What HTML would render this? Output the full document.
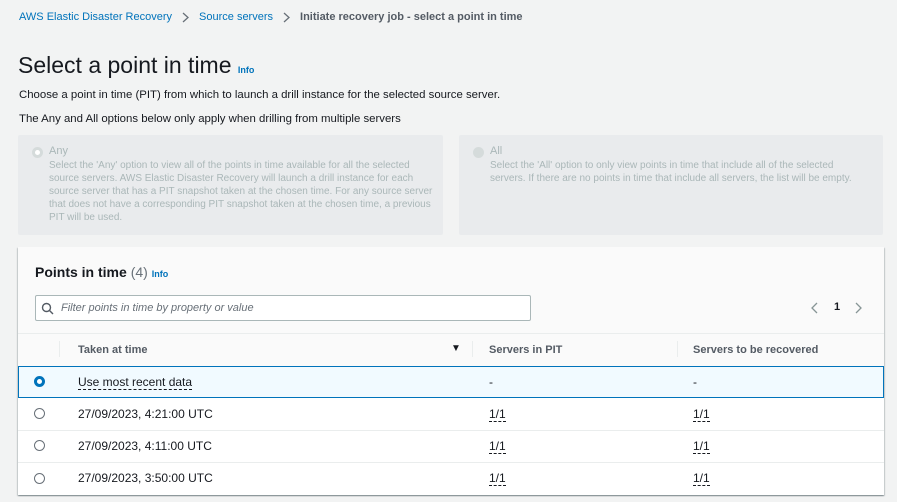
<!DOCTYPE html>
<html><head><style>
*{box-sizing:border-box;margin:0;padding:0}
body{width:897px;height:502px;background:#f2f3f3;font-family:"Liberation Sans",sans-serif;color:#16191f;position:relative;overflow:hidden;font-size:12px}
.a{position:absolute;white-space:nowrap}
.link{color:#0073bb}
.card{position:absolute;background:#e9ebed;border-radius:2px}
.dim{color:#aab7b8}
.rad{position:absolute;width:11px;height:11px;border-radius:50%}
.ul{border-bottom:1px dashed #16191f}
.chev{display:inline-block;vertical-align:middle;margin:0 10px}
</style></head><body>
<div class="a" style="left:19px;top:11px;font-size:11px"><span class="link">AWS Elastic Disaster Recovery</span><svg class="chev" width="7" height="11" viewBox="0 0 7 11"><path d="M1 1l5 4.5L1 10" fill="none" stroke="#687078" stroke-width="1.3"/></svg><span class="link">Source servers</span><svg class="chev" width="7" height="11" viewBox="0 0 7 11"><path d="M1 1l5 4.5L1 10" fill="none" stroke="#687078" stroke-width="1.3"/></svg><span style="color:#545b64;font-weight:bold">Initiate recovery job - select a point in time</span></div>
<div class="a" style="left:18px;top:52px;font-size:23px">Select a point in time <span class="link" style="font-size:9px;font-weight:bold">Info</span></div>
<div class="a" style="left:19px;top:89px;font-size:11.4px">Choose a point in time (PIT) from which to launch a drill instance for the selected source server.</div>
<div class="a" style="left:19px;top:113px;font-size:11.4px">The Any and All options below only apply when drilling from multiple servers</div>
<div class="card" style="left:18px;top:135px;width:425px;height:100px"></div>
<div class="card" style="left:459px;top:135px;width:424px;height:100px"></div>
<div class="rad" style="left:32px;top:147px;border:3px solid #d5dbdb;background:#fff"></div>
<div class="a dim" style="left:49px;top:145px;font-size:11px">Any</div>
<div class="a dim" style="left:49px;top:159px;font-size:10px;line-height:13px">Select the 'Any' option to view all of the points in time available for all the selected<br>source servers. AWS Elastic Disaster Recovery will launch a drill instance for each<br>source server that has a PIT snapshot taken at the chosen time. For any source server<br>that does not have a corresponding PIT snapshot taken at the chosen time, a previous<br>PIT will be used.</div>
<div class="rad" style="left:473px;top:147px;background:#d5dbdb"></div>
<div class="a dim" style="left:490px;top:145px;font-size:11px">All</div>
<div class="a dim" style="left:490px;top:159px;font-size:10px;line-height:13px">Select the 'All' option to only view points in time that include all of the selected<br>servers. If there are no points in time that include all servers, the list will be empty.</div>
<div style="position:absolute;left:18px;top:247px;width:866px;height:248px;background:#fafafa;box-shadow:0 1px 1px rgba(0,28,36,.3),1px 1px 1px rgba(0,28,36,.15),-1px 1px 1px rgba(0,28,36,.15)"></div>
<div style="position:absolute;left:18px;top:366px;width:866px;height:129px;background:#fff"></div>
<div class="a" style="left:35px;top:264px;font-size:14px;font-weight:bold">Points in time <span style="font-weight:normal;color:#687078">(4)</span> <span class="link" style="font-size:9px">Info</span></div>
<div style="position:absolute;left:35px;top:295px;width:496px;height:26px;border:1px solid #aab7b8;border-radius:2px;background:#fff"></div>
<svg style="position:absolute;left:41px;top:302px" width="13" height="13" viewBox="0 0 13 13"><circle cx="5.5" cy="5.5" r="4" fill="none" stroke="#545b64" stroke-width="1.4"/><line x1="8.5" y1="8.5" x2="12" y2="12" stroke="#545b64" stroke-width="1.4"/></svg>
<div class="a" style="left:61px;top:302px;font-size:11px;font-style:italic;color:#687078">Filter points in time by property or value</div>
<svg style="position:absolute;left:811px;top:302px" width="7" height="12" viewBox="0 0 7 12"><path d="M6 1L1 6l5 5" fill="none" stroke="#879596" stroke-width="1.3"/></svg>
<div class="a" style="left:834px;top:301px;font-size:11px;font-weight:bold">1</div>
<svg style="position:absolute;left:855px;top:302px" width="7" height="12" viewBox="0 0 7 12"><path d="M1 1l5 5-5 5" fill="none" stroke="#879596" stroke-width="1.3"/></svg>
<div style="position:absolute;left:18px;top:333px;width:866px;height:1px;background:#eaeded"></div>
<div style="position:absolute;left:59px;top:341px;width:1px;height:16px;background:#eaeded"></div>
<div style="position:absolute;left:472px;top:341px;width:1px;height:16px;background:#eaeded"></div>
<div style="position:absolute;left:677px;top:341px;width:1px;height:16px;background:#eaeded"></div>
<div class="a" style="left:78px;top:344px;font-weight:bold;font-size:11px;color:#545b64">Taken at time</div>
<div class="a" style="left:451px;top:343px;font-size:10px">&#x25BC;</div>
<div class="a" style="left:489px;top:344px;font-weight:bold;font-size:11px;color:#545b64">Servers in PIT</div>
<div class="a" style="left:693px;top:344px;font-weight:bold;font-size:11px;color:#545b64">Servers to be recovered</div>
<div style="position:absolute;left:18px;top:366px;width:866px;height:32px;background:#f1faff;border:1px solid #0073bb"></div>
<div class="rad" style="left:34px;top:376px;border:3.5px solid #0073bb;background:#fff"></div>
<div class="a" style="left:78px;top:375px"><span class="ul">Use most recent data</span></div>
<div class="a" style="left:489px;top:375px">-</div>
<div class="a" style="left:693px;top:375px">-</div>
<div style="position:absolute;left:18px;top:430px;width:866px;height:1px;background:#eaeded"></div>
<div style="position:absolute;left:18px;top:462px;width:866px;height:1px;background:#eaeded"></div>
<div class="rad" style="left:34px;top:408px;border:1px solid #687078"></div>
<div class="rad" style="left:34px;top:440px;border:1px solid #687078"></div>
<div class="rad" style="left:34px;top:473px;border:1px solid #687078"></div>
<div class="a" style="left:78px;top:407px">27/09/2023, 4:21:00 UTC</div>
<div class="a" style="left:78px;top:439px">27/09/2023, 4:11:00 UTC</div>
<div class="a" style="left:78px;top:471px">27/09/2023, 3:50:00 UTC</div>
<div class="a" style="left:489px;top:407px"><span class="ul">1/1</span></div>
<div class="a" style="left:489px;top:439px"><span class="ul">1/1</span></div>
<div class="a" style="left:489px;top:471px"><span class="ul">1/1</span></div>
<div class="a" style="left:693px;top:407px"><span class="ul">1/1</span></div>
<div class="a" style="left:693px;top:439px"><span class="ul">1/1</span></div>
<div class="a" style="left:693px;top:471px"><span class="ul">1/1</span></div>
</body></html>
